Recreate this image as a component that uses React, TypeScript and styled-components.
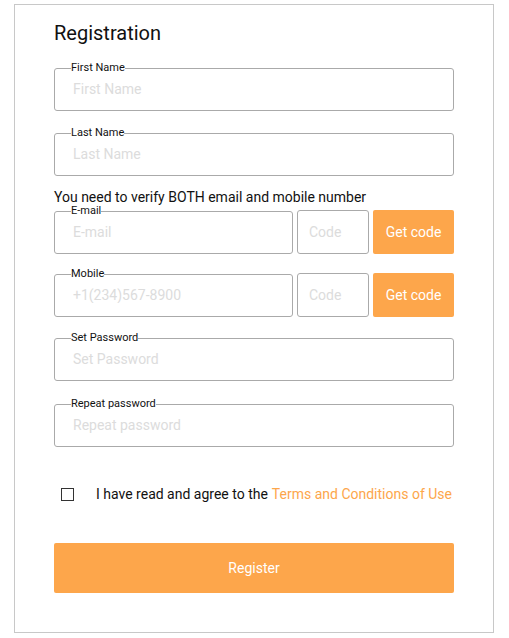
import { createGlobalStyle } from "styled-components";
import styled from "styled-components";

const GlobalStyle = createGlobalStyle`
  body {
    margin: 0;
    background: #fff;
    font-family: Roboto, "Liberation Sans", sans-serif;
    color: #111;
  }
`;

const ORANGE = "#fda64b";

const Card = styled.div`
  box-sizing: border-box;
  width: 480px;
  height: 629px;
  margin: 4px 0 0 14px;
  padding: 16px 39px 0 39px;
  border: 1px solid #c8c8c8;
`;

const Title = styled.h1`
  margin: 0 0 17px 0;
  font-size: 20px;
  font-weight: 400;
  line-height: 24px;
`;

const Field = styled.fieldset<{ $mt?: number }>`
  box-sizing: border-box;
  margin: ${({ $mt }) => $mt ?? 0}px 0 0 0;
  padding: 0 16px 6px 16px;
  min-width: 0;
  flex: 1;
  border: 1px solid #aaa;
  border-radius: 3px;
`;

const Legend = styled.legend`
  padding: 0;
  font-size: 11px;
  line-height: 12px;
  color: #111;
`;

const Input = styled.input`
  display: block;
  box-sizing: border-box;
  width: 100%;
  height: 30px;
  padding: 0 2px;
  border: none;
  outline: none;
  font-family: inherit;
  font-size: 14px;
  color: #222;
  background: transparent;

  &::placeholder {
    color: #dcdcdc;
  }
`;

const Note = styled.p`
  margin: 13px 0 0 0;
  font-size: 14px;
  line-height: 16px;
`;

const Row = styled.div<{ $mt: number }>`
  display: flex;
  align-items: flex-end;
  gap: 4px;
  margin-top: ${({ $mt }) => $mt}px;
`;

const CodeInput = styled.input`
  box-sizing: border-box;
  width: 72px;
  height: 44px;
  padding: 0 11px;
  border: 1px solid #aaa;
  border-radius: 3px;
  outline: none;
  font-family: inherit;
  font-size: 14px;

  &::placeholder {
    color: #dcdcdc;
  }
`;

const CodeButton = styled.button`
  box-sizing: border-box;
  width: 81px;
  height: 44px;
  border: none;
  border-radius: 2px;
  background: ${ORANGE};
  color: #fff;
  font-family: inherit;
  font-size: 14px;
  cursor: pointer;
`;

const Agree = styled.label`
  display: flex;
  align-items: center;
  margin-top: 39px;
  padding-left: 7px;
  font-size: 14px;
  line-height: 16px;
`;

const Box = styled.input`
  box-sizing: border-box;
  appearance: none;
  width: 13px;
  height: 13px;
  margin: 0 22px 0 0;
  border: 1px solid #333;
  border-radius: 0;
  background: #fff;
`;

const Link = styled.a`
  margin-left: 4px;
  color: ${ORANGE};
  text-decoration: none;
`;

const Register = styled.button`
  display: block;
  width: 100%;
  height: 50px;
  margin-top: 41px;
  border: none;
  border-radius: 2px;
  background: ${ORANGE};
  color: #fff;
  font-family: inherit;
  font-size: 14px;
  cursor: pointer;
`;

function App() {
  return (
    <>
      <GlobalStyle />
      <Card>
        <Title>Registration</Title>
        <Field>
          <Legend>First Name</Legend>
          <Input placeholder="First Name" />
        </Field>
        <Field $mt={16}>
          <Legend>Last Name</Legend>
          <Input placeholder="Last Name" />
        </Field>
        <Note>You need to verify BOTH email and mobile number</Note>
        <Row $mt={0}>
          <Field>
            <Legend>E-mail</Legend>
            <Input placeholder="E-mail" />
          </Field>
          <CodeInput placeholder="Code" />
          <CodeButton type="button">Get code</CodeButton>
        </Row>
        <Row $mt={14}>
          <Field>
            <Legend>Mobile</Legend>
            <Input placeholder="+1(234)567-8900" />
          </Field>
          <CodeInput placeholder="Code" />
          <CodeButton type="button">Get code</CodeButton>
        </Row>
        <Field $mt={15}>
          <Legend>Set Password</Legend>
          <Input type="password" placeholder="Set Password" />
        </Field>
        <Field $mt={17}>
          <Legend>Repeat password</Legend>
          <Input type="password" placeholder="Repeat password" />
        </Field>
        <Agree>
          <Box type="checkbox" />
          I have read and agree to the
          <Link href="#">Terms and Conditions of Use</Link>
        </Agree>
        <Register type="button">Register</Register>
      </Card>
    </>
  );
}

export default App;
